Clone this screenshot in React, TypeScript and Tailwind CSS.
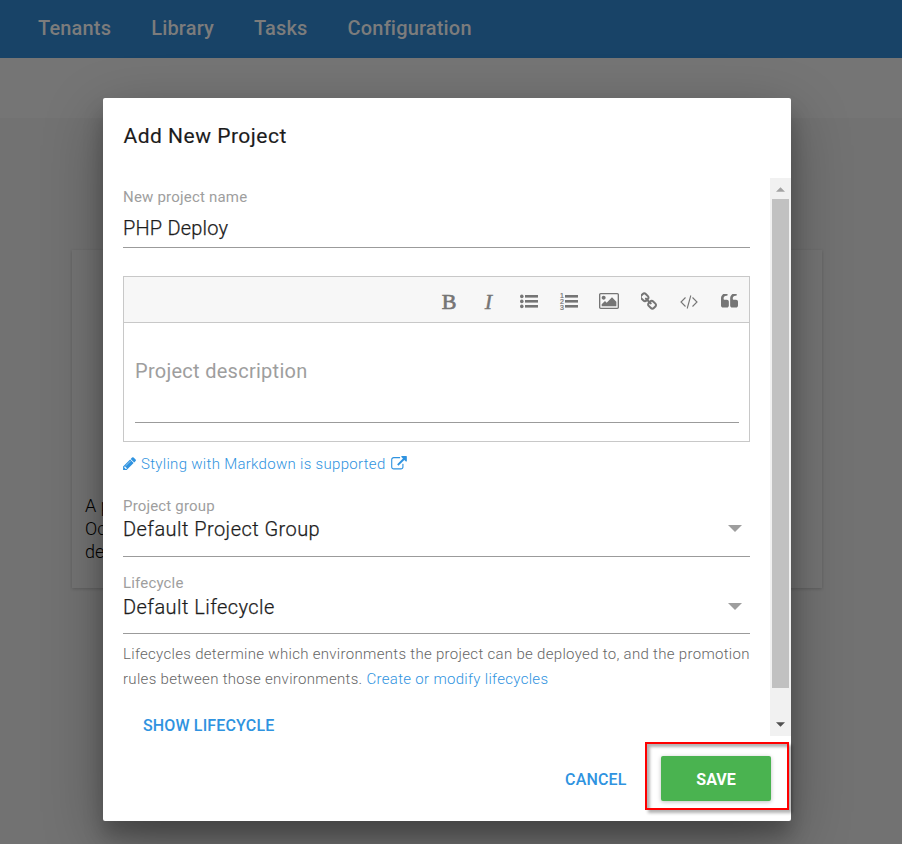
import React from "react";

const ICONS = {
  image:
    "M576 576q0 80-56 136t-136 56-136-56-56-136 56-136 136-56 136 56 56 136zm1024 384v448h-1408v-192l320-320 160 160 512-512zm96-704h-1600q-13 0-22.5 9.5t-9.5 22.5v1216q0 13 9.5 22.5t22.5 9.5h1600q13 0 22.5-9.5t9.5-22.5v-1216q0-13-9.5-22.5t-22.5-9.5zm160 32v1216q0 66-47 113t-113 47h-1600q-66 0-113-47t-47-113v-1216q0-66 47-113t113-47h1600q66 0 113 47t47 113z",
  link: "M1456 1216q0-40-28-68l-208-208q-28-28-68-28-42 0-72 32 3 3 19 18.5t21.5 21.5 15 19 13 25.5 3.5 27.5q0 40-28 68t-68 28q-15 0-27.5-3.5t-25.5-13-19-15-21.5-21.5-18.5-19q-33 31-33 73 0 40 28 68l206 207q27 27 68 27 40 0 68-26l147-146q28-28 28-67zm-703-705q0-40-28-68l-206-207q-28-28-68-28-39 0-68 27l-147 146q-28 28-28 67 0 40 28 68l208 208q27 27 68 27 42 0 72-31-3-3-19-18.5t-21.5-21.5-15-19-13-25.5-3.5-27.5q0-40 28-68t68-28q15 0 27.5 3.5t25.5 13 19 15 21.5 21.5 18.5 19q33-31 33-73zm895 705q0 120-85 203l-147 146q-83 83-203 83-121 0-204-85l-206-207q-83-83-83-203 0-123 88-209l-88-88q-86 88-208 88-120 0-204-84l-208-208q-84-84-84-204t85-203l147-146q83-83 203-83 121 0 204 85l206 207q83 83 83 203 0 123-88 209l88 88q86-88 208-88 120 0 204 84l208 208q84 84 84 204z",
  quote:
    "M832 960v384q0 80-56 136t-136 56h-384q-80 0-136-56t-56-136v-704q0-104 40.5-198.5t109.5-163.5 163.5-109.5 198.5-40.5h64q26 0 45 19t19 45v128q0 26-19 45t-45 19h-64q-106 0-181 75t-75 181v32q0 40 28 68t68 28h224q80 0 136 56t56 136zm896 0v384q0 80-56 136t-136 56h-384q-80 0-136-56t-56-136v-704q0-104 40.5-198.5t109.5-163.5 163.5-109.5 198.5-40.5h64q26 0 45 19t19 45v128q0 26-19 45t-45 19h-64q-106 0-181 75t-75 181v32q0 40 28 68t68 28h224q80 0 136 56t56 136z",
  pencil:
    "M491 1536l91-91-235-235-91 91v107h128v128h107zm523-928q0-22-22-22-10 0-17 7l-542 542q-7 7-7 17 0 22 22 22 10 0 17-7l542-542q7-7 7-17zm-54-192l416 416-832 832h-416v-416zm683 96q0 53-37 90l-166 166-416-416 166-165q36-38 90-38 53 0 91 38l235 234q37 39 37 91z",
  external:
    "M1408 928v320q0 119-84.5 203.5t-203.5 84.5h-832q-119 0-203.5-84.5t-84.5-203.5v-832q0-119 84.5-203.5t203.5-84.5h704q14 0 23 9t9 23v64q0 14-9 23t-23 9h-704q-66 0-113 47t-47 113v832q0 66 47 113t113 47h832q66 0 113-47t47-113v-320q0-14 9-23t23-9h64q14 0 23 9t9 23zm384-864v512q0 26-19 45t-45 19-45-19l-176-176-652 652q-10 10-23 10t-23-10l-114-114q-10-10-10-23t10-23l652-652-176-176q-19-19-19-45t19-45 45-19h512q26 0 45 19t19 45z",
};

function Icon({ d, box, className }: { d: string; box: string; className: string }) {
  return (
    <svg viewBox={box} className={className} fill="currentColor" aria-hidden="true">
      <path d={d} />
    </svg>
  );
}

function Lines() {
  return (
    <>
      <rect x="5" y="1" width="13" height="2.6" />
      <rect x="5" y="6" width="13" height="2.6" />
      <rect x="5" y="11" width="13" height="2.6" />
    </>
  );
}

function Toolbar() {
  const cell = "flex w-10 items-center justify-center";
  return (
    <div className="flex h-[46px] justify-end border-b border-[#c8c8c8] bg-[#f7f7f7] text-[#757575] [font-family:'Liberation_Serif',serif]">
      <div className={cell}>
        <span className="mt-1 text-[22px] leading-none [-webkit-text-stroke:0.7px_#757575]">B</span>
      </div>
      <div className={cell}>
        <span className="mt-1 mr-px text-[22px] leading-none italic [-webkit-text-stroke:0.4px_#757575]">I</span>
      </div>
      <div className={cell}>
        <svg viewBox="0 0 18 15" className="mt-1 h-[15px] w-[18px]" fill="currentColor">
          <circle cx="1.8" cy="2.4" r="1.8" />
          <circle cx="1.8" cy="7.4" r="1.8" />
          <circle cx="1.8" cy="12.4" r="1.8" />
          <Lines />
        </svg>
      </div>
      <div className={cell}>
        <div className="mt-1 flex h-[18px] items-center">
          <div className="flex w-[5px] flex-col text-[7px] leading-[6px] [font-family:'Liberation_Sans',sans-serif] [-webkit-text-stroke:0.2px_#757575]">
            <span>1</span>
            <span>2</span>
            <span>3</span>
          </div>
          <svg viewBox="5 0 13 15" className="h-[15px] w-[13px]" fill="currentColor">
            <Lines />
          </svg>
        </div>
      </div>
      <div className={cell}>
        <Icon d={ICONS.image} box="-64 128 1920 1536" className="mt-[3px] h-4 w-5" />
      </div>
      <div className={cell}>
        <Icon d={ICONS.link} box="144 0 1504 1664" className="mt-[2px] mr-px h-[18px] w-4" />
      </div>
      <div className={cell}>
        <svg viewBox="0 0 18 14" className="mt-1 h-[14px] w-[18px]" fill="none" stroke="currentColor" strokeWidth="1.1">
          <path d="M5.500 2.500 1 7l4.500 4.500M12.500 2.500 17 7l-4.500 4.500M10.800.5 7.200 13.500" />
        </svg>
      </div>
      <div className={cell}>
        <Icon d={ICONS.quote} box="64 256 1664 1280" className="mt-[2px] h-[14px] w-[17px]" />
      </div>
    </div>
  );
}

function Select({ label, value, low }: { label: string; value: string; low?: boolean }) {
  return (
    <div className="flex h-full flex-col border-b border-[#9b9b9b]">
      <span className="text-[15px] leading-5 tracking-[0.17px] text-[#9e9e9e]">{label}</span>
      <div className={low ? "mt-px flex items-center justify-between pr-2" : "flex items-center justify-between pr-2"}>
        <span className="text-[20px] leading-[26px] font-light tracking-[0.45px] text-[#1c1c1c] [-webkit-text-stroke:0.25px_#1c1c1c]">
          {value}
        </span>
        <svg viewBox="0 0 14 7" className="-mt-px h-[7px] w-[14px]" fill="#9e9e9e">
          <path d="M0 0h14L7 7z" />
        </svg>
      </div>
    </div>
  );
}

function Scrollbar() {
  return (
    <div className="flex h-[558px] w-[21px] flex-col items-center bg-[#f1f1f1]">
      <div className="flex h-[21px] items-center">
        <svg viewBox="0 0 10 5" className="mt-0.5 h-[5px] w-[9px]" fill="#a3a3a3">
          <path d="M5 0l5 5H0z" />
        </svg>
      </div>
      <div className="h-[489px] w-[17px] bg-[#c1c1c1]" />
      <div className="flex flex-1 items-center">
        <svg viewBox="0 0 10 5" className="mt-[25px] h-[5px] w-[9px]" fill="#505050">
          <path d="M0 0h10L5 5z" />
        </svg>
      </div>
    </div>
  );
}

function Dialog() {
  return (
    <div className="absolute top-[98px] left-[103px] flex h-[723px] w-[688px] flex-col rounded-[2px] bg-white shadow-[0_19px_60px_rgba(0,0,0,0.3),0_15px_20px_rgba(0,0,0,0.22)]">
      <h1 className="h-20 pt-[25px] pl-[20.5px] text-[21px] leading-[26px] font-normal tracking-[0.5px] text-[#1c1c1c] [-webkit-text-stroke:0.15px_#1c1c1c]">
        Add New Project
      </h1>
      <div className="flex h-[558px] justify-between">
        <div className="ml-[20px] w-[627px]">
          <div className="flex h-[70px] flex-col border-b border-[#9b9b9b] pt-[9px]">
            <span className="text-[15px] leading-5 tracking-[0.2px] text-[#9e9e9e]">New project name</span>
            <span className="mt-2 text-[20px] leading-[26px] font-light tracking-[0.2px] text-[#1c1c1c] [-webkit-text-stroke:0.25px_#1c1c1c]">
              PHP Deploy
            </span>
          </div>
          <div className="mt-7 h-[166px] border border-[#c8c8c8]">
            <Toolbar />
            <div className="mr-[10px] ml-[11px] h-[100px] border-b border-[#9b9b9b] pt-[35px] text-[20px] leading-[26px] tracking-[0.27px] text-[#9e9e9e]">
              Project description
            </div>
          </div>
          <div className="mt-[12px] flex h-5 items-center text-[15px] font-light tracking-[0.3px] text-[#2f93e0]">
            <Icon d={ICONS.pencil} box="128 128 1515 1536" className="mr-[5px] mb-px h-[13px] w-[13px]" />
            <span>Styling with Markdown is supported</span>
            <Icon d={ICONS.external} box="0 0 1792 1600" className="mb-[2px] ml-[5px] h-[14px] w-[16px]" />
          </div>
          <div className="mt-[22px] h-[61px]">
            <Select label="Project group" value="Default Project Group" />
          </div>
          <div className="mt-4 h-[61px]">
            <Select label="Lifecycle" value="Default Lifecycle" low />
          </div>
          <p className="mt-2 text-[15px] leading-[25px] font-light tracking-[0.31px] whitespace-nowrap text-[#666]">
            Lifecycles determine which environments the project can be deployed to, and the promotion
            <br />
            rules between those environments. <a className="text-[#2f93e0]">Create or modify lifecycles</a>
          </p>
          <button className="mt-[22px] ml-[20px] block text-[16px] leading-6 font-medium tracking-[0.15px] text-[#2f93e0]">
            SHOW LIFECYCLE
          </button>
        </div>
        <Scrollbar />
      </div>
      <div className="flex items-start justify-end pt-5 pr-[20px] text-[16px] font-medium">
        <button className="mr-[34.5px] h-[45px] pt-[2px] tracking-[0.15px] text-[#2f93e0]">CANCEL</button>
        <div className="relative">
          <button className="h-[45px] w-[110px] rounded-[2px] bg-[#4ab350] pt-[2px] font-bold text-white shadow-[0_1px_4px_rgba(0,0,0,0.25)]">
            SAVE
          </button>
          <div className="pointer-events-none absolute -top-[14px] -left-[16px] h-[68px] w-[144px] border-2 border-[#f00] shadow-[3px_3px_3px_rgba(0,0,0,0.3),inset_3px_3px_3px_rgba(0,0,0,0.3)]" />
        </div>
      </div>
    </div>
  );
}

export default function App() {
  return (
    <div className="relative h-[844px] w-[902px] overflow-hidden bg-[#727272] [font-family:Roboto,sans-serif]">
      <nav className="flex h-[58px] gap-[40px] bg-[#184367] pl-[38px] text-[20px] leading-[56px] font-medium tracking-[0.17px] text-[#7c7c7c]">
        <span>Tenants</span>
        <span>Library</span>
        <span>Tasks</span>
        <span>Configuration</span>
      </nav>
      <div className="h-[60px] bg-[#757575]" />
      <div className="mt-[132px] ml-[72px] flex h-[338px] w-[750px] flex-col justify-end bg-[#747474] pb-[25px] pl-[13px] text-[18px] leading-[23px] font-light text-black shadow-[0_1px_3px_rgba(0,0,0,0.18)]">
        <span>A p</span>
        <span>Oc</span>
        <span>de</span>
      </div>
      <Dialog />
    </div>
  );
}
